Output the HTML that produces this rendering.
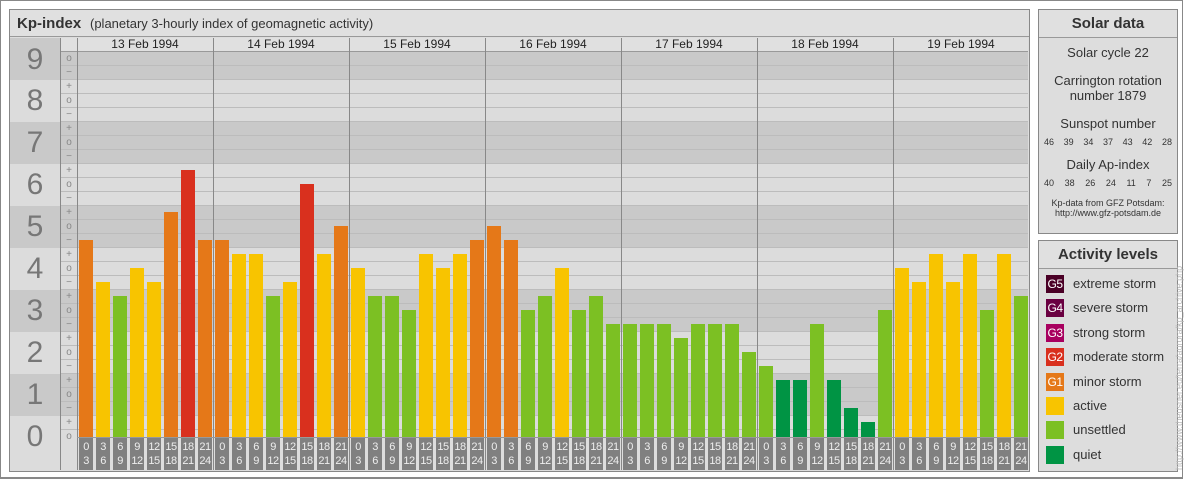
<!DOCTYPE html>
<html><head><meta charset="utf-8"><style>
*{margin:0;padding:0;box-sizing:border-box}
body{width:1184px;height:480px;background:#fff;position:relative;overflow:hidden;font-family:"Liberation Sans",sans-serif;color:#333}
.a{position:absolute}
#frame{left:0;top:0;width:1183px;height:479px;border:1px solid #888;border-bottom-width:2px}
#main{left:9px;top:9px;width:1021px;height:463px;border:1px solid #888;background:#ddd}
#title{left:10px;top:10px;width:1019px;height:27px;background:#e0e0e0;border-bottom:1px solid #999}
.band{left:10px;width:1018px}
.dk{background:#c9c9c9}.lt{background:#dcdcdc}
.grid{left:61px;top:52px;width:967px;height:385px;background:repeating-linear-gradient(to bottom,transparent 0,transparent 13px,#bcbcbc 13px,#bcbcbc 14px)}
.dig{left:10px;width:50px;text-align:center;font-size:30px;color:#777;line-height:30px}
.sg{left:61px;width:16px;text-align:center;font-size:10px;color:#888;line-height:14px;height:14px}
.vl{width:1px;background:#888;top:38px;height:432px}
.date{top:38px;width:136px;height:13px;text-align:center;font-size:12px;line-height:13px;color:#222}
.day{top:52px;height:385px;width:136px;display:flex;align-items:flex-end;padding-left:2px;gap:3px}
.day div{width:14px}
.lab{top:438px;height:32px;width:136px;display:flex;padding-left:2px;gap:3px}
.lab div{width:14px;height:32px;background:#808080;color:#eee;font-size:11px;line-height:14px;text-align:center;padding-top:2px;letter-spacing:-0.5px}
.O{background:#e57818}.Y{background:#f8c400}.G{background:#7cc023}.R{background:#d9301e}.D{background:#009444}
.box{left:1038px;width:140px;border:1px solid #888;background:#ddd}
.bh{height:28px;border-bottom:1px solid #999;background:#e0e0e0;text-align:center;font-weight:bold;font-size:15px;line-height:28px;color:#333}
.st{text-align:center;font-size:13px;color:#333;line-height:15px}
.nums{display:flex;justify-content:space-between;font-size:9px;padding:0 5px;color:#333}
.it{left:8px;height:18px;font-size:13px;line-height:18px;color:#333}
.it span{display:inline-block;width:18px;height:18px;color:#fff;font-size:12px;text-align:center;vertical-align:top;margin-right:9px;letter-spacing:-0.5px}
</style></head><body>
<div class="a" id="frame"></div>
<div class="a" id="main"></div>
<div class="a" id="title"><span style="position:absolute;left:7px;top:5px;font-size:15px;font-weight:bold;color:#333">Kp-index</span><span style="position:absolute;left:80px;top:6px;font-size:13px;color:#333">(planetary 3-hourly index of geomagnetic activity)</span></div>
<div class="a" style="left:10px;top:38px;width:1018px;height:14px;background:#e0e0e0;border-bottom:1px solid #999"></div>
<div class="a" style="left:10px;top:38px;width:51px;height:14px;background:#c9c9c9"></div>
<div class="a band dk" style="top:52px;height:28px"></div>
<div class="a band lt" style="top:80px;height:42px"></div>
<div class="a band dk" style="top:122px;height:42px"></div>
<div class="a band lt" style="top:164px;height:42px"></div>
<div class="a band dk" style="top:206px;height:42px"></div>
<div class="a band lt" style="top:248px;height:42px"></div>
<div class="a band dk" style="top:290px;height:42px"></div>
<div class="a band lt" style="top:332px;height:42px"></div>
<div class="a band dk" style="top:374px;height:42px"></div>
<div class="a band lt" style="top:416px;height:21px"></div>
<div class="a lt" style="left:10px;top:437px;width:67px;height:33px"></div>
<div class="a grid"></div>
<div class="a" style="left:10px;top:38px;width:51px;height:42px;background:#c9c9c9"></div>
<div class="a dig" style="top:45px">9</div>
<div class="a dig" style="top:86px">8</div>
<div class="a dig" style="top:128px">7</div>
<div class="a dig" style="top:170px">6</div>
<div class="a dig" style="top:212px">5</div>
<div class="a dig" style="top:254px">4</div>
<div class="a dig" style="top:296px">3</div>
<div class="a dig" style="top:338px">2</div>
<div class="a dig" style="top:380px">1</div>
<div class="a dig" style="top:422px">0</div>
<div class="a" style="left:10px;top:52px;width:51px;height:418px;background:transparent"></div>
<div class="a sg" style="top:52px">o</div><div class="a sg" style="top:66px">−</div>
<div class="a sg" style="top:80px">+</div><div class="a sg" style="top:94px">o</div><div class="a sg" style="top:108px">−</div>
<div class="a sg" style="top:122px">+</div><div class="a sg" style="top:136px">o</div><div class="a sg" style="top:150px">−</div>
<div class="a sg" style="top:164px">+</div><div class="a sg" style="top:178px">o</div><div class="a sg" style="top:192px">−</div>
<div class="a sg" style="top:206px">+</div><div class="a sg" style="top:220px">o</div><div class="a sg" style="top:234px">−</div>
<div class="a sg" style="top:248px">+</div><div class="a sg" style="top:262px">o</div><div class="a sg" style="top:276px">−</div>
<div class="a sg" style="top:290px">+</div><div class="a sg" style="top:304px">o</div><div class="a sg" style="top:318px">−</div>
<div class="a sg" style="top:332px">+</div><div class="a sg" style="top:346px">o</div><div class="a sg" style="top:360px">−</div>
<div class="a sg" style="top:374px">+</div><div class="a sg" style="top:388px">o</div><div class="a sg" style="top:402px">−</div>
<div class="a sg" style="top:416px">+</div><div class="a sg" style="top:430px">o</div>
<div class="a vl" style="left:60px"></div>
<div class="a vl" style="left:77px"></div>
<div class="a vl" style="left:213px"></div>
<div class="a vl" style="left:349px"></div>
<div class="a vl" style="left:485px"></div>
<div class="a vl" style="left:621px"></div>
<div class="a vl" style="left:757px"></div>
<div class="a vl" style="left:893px"></div>
<div class="a date" style="left:77px">13 Feb 1994</div>
<div class="a date" style="left:213px">14 Feb 1994</div>
<div class="a date" style="left:349px">15 Feb 1994</div>
<div class="a date" style="left:485px">16 Feb 1994</div>
<div class="a date" style="left:621px">17 Feb 1994</div>
<div class="a date" style="left:757px">18 Feb 1994</div>
<div class="a date" style="left:893px">19 Feb 1994</div>

<div class="a day" style="left:77px"><div class="O" style="height:197px"></div><div class="Y" style="height:155px"></div><div class="G" style="height:141px"></div><div class="Y" style="height:169px"></div><div class="Y" style="height:155px"></div><div class="O" style="height:225px"></div><div class="R" style="height:267px"></div><div class="O" style="height:197px"></div></div>
<div class="a day" style="left:213px"><div class="O" style="height:197px"></div><div class="Y" style="height:183px"></div><div class="Y" style="height:183px"></div><div class="G" style="height:141px"></div><div class="Y" style="height:155px"></div><div class="R" style="height:253px"></div><div class="Y" style="height:183px"></div><div class="O" style="height:211px"></div></div>
<div class="a day" style="left:349px"><div class="Y" style="height:169px"></div><div class="G" style="height:141px"></div><div class="G" style="height:141px"></div><div class="G" style="height:127px"></div><div class="Y" style="height:183px"></div><div class="Y" style="height:169px"></div><div class="Y" style="height:183px"></div><div class="O" style="height:197px"></div></div>
<div class="a day" style="left:485px"><div class="O" style="height:211px"></div><div class="O" style="height:197px"></div><div class="G" style="height:127px"></div><div class="G" style="height:141px"></div><div class="Y" style="height:169px"></div><div class="G" style="height:127px"></div><div class="G" style="height:141px"></div><div class="G" style="height:113px"></div></div>
<div class="a day" style="left:621px"><div class="G" style="height:113px"></div><div class="G" style="height:113px"></div><div class="G" style="height:113px"></div><div class="G" style="height:99px"></div><div class="G" style="height:113px"></div><div class="G" style="height:113px"></div><div class="G" style="height:113px"></div><div class="G" style="height:85px"></div></div>
<div class="a day" style="left:757px"><div class="G" style="height:71px"></div><div class="D" style="height:57px"></div><div class="D" style="height:57px"></div><div class="G" style="height:113px"></div><div class="D" style="height:57px"></div><div class="D" style="height:29px"></div><div class="D" style="height:15px"></div><div class="G" style="height:127px"></div></div>
<div class="a day" style="left:893px"><div class="Y" style="height:169px"></div><div class="Y" style="height:155px"></div><div class="Y" style="height:183px"></div><div class="Y" style="height:155px"></div><div class="Y" style="height:183px"></div><div class="G" style="height:127px"></div><div class="Y" style="height:183px"></div><div class="G" style="height:141px"></div></div>

<div class="a" style="left:77px;top:437px;width:951px;height:1px;background:#999"></div>
<div class="a lab" style="left:77px"><div>0<br>3</div><div>3<br>6</div><div>6<br>9</div><div>9<br>12</div><div>12<br>15</div><div>15<br>18</div><div>18<br>21</div><div>21<br>24</div></div>
<div class="a lab" style="left:213px"><div>0<br>3</div><div>3<br>6</div><div>6<br>9</div><div>9<br>12</div><div>12<br>15</div><div>15<br>18</div><div>18<br>21</div><div>21<br>24</div></div>
<div class="a lab" style="left:349px"><div>0<br>3</div><div>3<br>6</div><div>6<br>9</div><div>9<br>12</div><div>12<br>15</div><div>15<br>18</div><div>18<br>21</div><div>21<br>24</div></div>
<div class="a lab" style="left:485px"><div>0<br>3</div><div>3<br>6</div><div>6<br>9</div><div>9<br>12</div><div>12<br>15</div><div>15<br>18</div><div>18<br>21</div><div>21<br>24</div></div>
<div class="a lab" style="left:621px"><div>0<br>3</div><div>3<br>6</div><div>6<br>9</div><div>9<br>12</div><div>12<br>15</div><div>15<br>18</div><div>18<br>21</div><div>21<br>24</div></div>
<div class="a lab" style="left:757px"><div>0<br>3</div><div>3<br>6</div><div>6<br>9</div><div>9<br>12</div><div>12<br>15</div><div>15<br>18</div><div>18<br>21</div><div>21<br>24</div></div>
<div class="a lab" style="left:893px"><div>0<br>3</div><div>3<br>6</div><div>6<br>9</div><div>9<br>12</div><div>12<br>15</div><div>15<br>18</div><div>18<br>21</div><div>21<br>24</div></div>

<div class="a box" style="top:9px;height:225px">
<div class="bh">Solar data</div>
<div class="st" style="margin-top:7px">Solar cycle 22</div>
<div class="st" style="margin-top:13px">Carrington rotation<br>number 1879</div>
<div class="st" style="margin-top:13px">Sunspot number</div>
<div class="nums" style="margin-top:6px"><span>46</span><span>39</span><span>34</span><span>37</span><span>43</span><span>42</span><span>28</span></div>
<div class="st" style="margin-top:10px">Daily Ap-index</div>
<div class="nums" style="margin-top:6px"><span>40</span><span>38</span><span>26</span><span>24</span><span>11</span><span>7</span><span>25</span></div>
<div style="text-align:center;font-size:9px;line-height:10px;margin-top:10px;color:#333">Kp-data from GFZ Potsdam:<br>http://www.gfz-potsdam.de</div>
</div>
<div class="a box" style="top:240px;height:232px">
<div class="bh">Activity levels</div>
</div>
<div class="a it" style="left:1046px;top:275px"><span style="background:#4a0026">G5</span>extreme storm</div>
<div class="a it" style="left:1046px;top:299px"><span style="background:#6a0041">G4</span>severe storm</div>
<div class="a it" style="left:1046px;top:324px"><span style="background:#a8005f">G3</span>strong storm</div>
<div class="a it" style="left:1046px;top:348px"><span style="background:#d9301e">G2</span>moderate storm</div>
<div class="a it" style="left:1046px;top:373px"><span style="background:#e57818">G1</span>minor storm</div>
<div class="a it" style="left:1046px;top:397px"><span style="background:#f8c400"></span>active</div>
<div class="a it" style="left:1046px;top:421px"><span style="background:#7cc023"></span>unsettled</div>
<div class="a it" style="left:1046px;top:446px"><span style="background:#009444"></span>quiet</div>
<div class="a" style="left:1174px;top:470px;transform:rotate(-90deg);transform-origin:0 0;font-size:9px;color:#bbb;white-space:nowrap;line-height:10px">http://www.theusner.eu/terra/aurora/kp_archive.php</div>
</body></html>
